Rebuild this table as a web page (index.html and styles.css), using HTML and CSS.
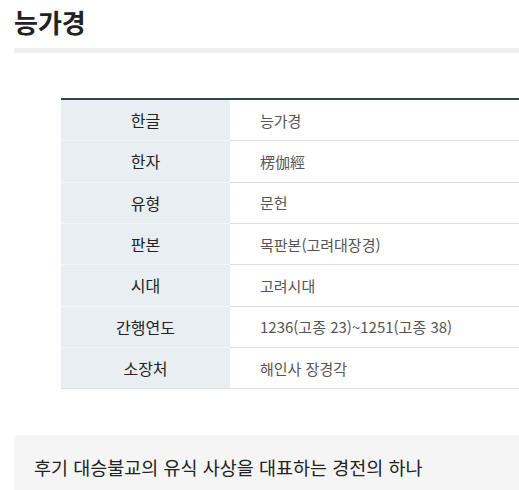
FILE: index.html
```html
<!DOCTYPE html>
<html lang="ko">
<head>
<meta charset="utf-8">
<title>능가경</title>
<link rel="stylesheet" href="styles.css">
</head>
<body>
<div class="page">
  <h1 class="title">능가경</h1>
  <div class="divider"></div>
  <table class="info">
    <tbody>
      <tr><th>한글</th><td>능가경</td></tr>
      <tr><th>한자</th><td>楞伽經</td></tr>
      <tr><th>유형</th><td>문헌</td></tr>
      <tr><th>판본</th><td>목판본(고려대장경)</td></tr>
      <tr><th>시대</th><td>고려시대</td></tr>
      <tr><th>간행연도</th><td>1236(고종 23)~1251(고종 38)</td></tr>
      <tr><th>소장처</th><td>해인사 장경각</td></tr>
    </tbody>
  </table>
  <div class="summary">후기 대승불교의 유식 사상을 대표하는 경전의 하나</div>
</div>
</body>
</html>
```
FILE: styles.css
```css
html, body {
  margin: 0;
  padding: 0;
  overflow: hidden;
  background: #fff;
}
body {
  font-family: "Noto Sans CJK KR", "Noto Sans", sans-serif;
  color: #333;
}
.page {
  width: 640px;
  padding-left: 14px;
}
.title {
  margin: 0;
  padding-top: 4px;
  font-size: 26px;
  line-height: 36px;
  font-weight: 700;
  color: #222;
}
.divider {
  height: 5px;
  background: #efefef;
  margin-top: 8px;
}
.info {
  margin-top: 45px;
  margin-left: 47px;
  width: 580px;
  border-collapse: collapse;
  border-top: 2px solid #2c4a4a;
  font-size: 15px;
}
.info th {
  width: 169px;
  height: 40.33px;
  padding: 0;
  background: #e8eef1;
  color: #222;
  font-size: 16px;
  font-weight: 400;
  text-align: center;
  border-bottom: 1px solid #f4f7f8;
}
.info td {
  height: 40.33px;
  padding: 0 0 0 30px;
  color: #555;
  text-align: left;
  border-bottom: 1px solid #dcdfe1;
}
.info tr:last-child th {
  border-bottom-color: #dcdfe1;
}
.summary {
  margin-top: 46px;
  background: #f5f5f5;
  border-radius: 5px;
  padding: 18px 20px;
  font-size: 18.5px;
  line-height: 28px;
  color: #222;
}
```
